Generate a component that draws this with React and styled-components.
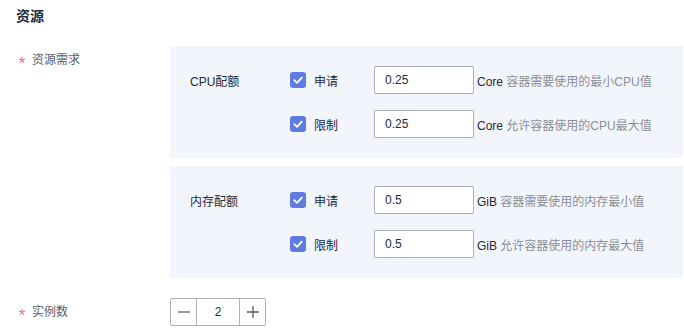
import React from "react";
import styled, { createGlobalStyle } from "styled-components";

const Global = createGlobalStyle`
  html, body { margin: 0; padding: 0; background: #fff; }
  body { font-family: "Liberation Sans", "Noto Sans CJK SC", sans-serif; font-size: 12px; color: #252b3a; }
  * { box-sizing: border-box; }
`;

const Page = styled.div`
  width: 684px;
  padding: 0 1px 0 16px;
`;

const Title = styled.div`
  height: 32px;
  line-height: 32px;
  font-size: 14px;
  font-weight: bold;
  color: #252b3a;
  margin-bottom: 14px;
`;

const FormItem = styled.div`
  display: grid;
  grid-template-columns: 154px 1fr;
  margin-top: ${(p) => p.$mt || 0}px;
`;

const ItemLabel = styled.div`
  display: flex;
  align-items: flex-start;
  height: 28px;
  line-height: 28px;
  color: #575d6c;
`;

const Star = styled.span`
  width: 12px;
  margin-right: 4px;
  margin-top: 9px;
  text-align: center;
  color: #f66f6a;
  font-size: 17px;
  line-height: 1;
`;

const Panels = styled.div`
  display: flex;
  flex-direction: column;
  gap: 8px;
`;

const Panel = styled.div`
  background: #f2f5fc;
  padding: 20px;
  display: grid;
  grid-template-columns: 100px 1fr;
`;

const PanelLabel = styled.div`
  line-height: 28px;
  margin-top: 2px;
  color: #252b3a;
`;

const Rows = styled.div`
  display: flex;
  flex-direction: column;
  gap: 16px;
`;

const Row = styled.div`
  display: flex;
  align-items: center;
  height: 28px;
`;

const Check = styled.label`
  display: flex;
  align-items: center;
  gap: 8px;
  width: 84px;
  color: #252b3a;
`;

const Box = styled.span`
  width: 16px;
  height: 16px;
  border-radius: 3px;
  background: #5e7ce0;
  display: flex;
  align-items: center;
  justify-content: center;
`;

const Input = styled.div`
  width: 100px;
  height: 28px;
  border: 1px solid #adb0b8;
  border-radius: 2px;
  background: #fff;
  padding: 0 10px;
  line-height: 26px;
  color: #252b3a;
`;

const Hint = styled.span`
  margin-left: 3px;
  color: #8a8e99;
  white-space: nowrap;
`;

const Unit = styled.span`
  color: #252b3a;
`;

const Stepper = styled.div`
  display: flex;
  width: 96px;
  height: 28px;
  border: 1px solid #adb0b8;
  border-radius: 2px;
  background: #fff;
`;

const StepBtn = styled.span`
  width: 26px;
  display: flex;
  align-items: center;
  justify-content: center;
  ${(p) => (p.$side === "left" ? "border-right: 1px solid #adb0b8;" : "border-left: 1px solid #adb0b8;")}
`;

const StepValue = styled.span`
  flex: 1;
  text-align: center;
  line-height: 26px;
  color: #252b3a;
`;

const CheckIcon = () => (
  <svg width="12" height="12" viewBox="0 0 12 12">
    <path d="M2.2 6.2 L5 8.8 L9.8 3.6" fill="none" stroke="#fff" strokeWidth="1.8" strokeLinecap="round" strokeLinejoin="round" />
  </svg>
);

const Minus = () => (
  <svg width="14" height="14" viewBox="0 0 14 14">
    <path d="M1 7 H13" stroke="#575d6c" strokeWidth="1.3" />
  </svg>
);

const Plus = () => (
  <svg width="14" height="14" viewBox="0 0 14 14">
    <path d="M1 7 H13 M7 1 V13" stroke="#575d6c" strokeWidth="1.3" />
  </svg>
);

const quotas = [
  {
    label: "CPU配额",
    unit: "Core",
    rows: [
      { name: "申请", value: "0.25", hint: "容器需要使用的最小CPU值" },
      { name: "限制", value: "0.25", hint: "允许容器使用的CPU最大值" },
    ],
  },
  {
    label: "内存配额",
    unit: "GiB",
    rows: [
      { name: "申请", value: "0.5", hint: "容器需要使用的内存最小值" },
      { name: "限制", value: "0.5", hint: "允许容器使用的内存最大值" },
    ],
  },
];

export default function App() {
  return (
    <>
      <Global />
      <Page>
        <Title>资源</Title>
        <FormItem>
          <ItemLabel>
            <Star>*</Star>资源需求
          </ItemLabel>
          <Panels>
            {quotas.map((q) => (
              <Panel key={q.label}>
                <PanelLabel>{q.label}</PanelLabel>
                <Rows>
                  {q.rows.map((r) => (
                    <Row key={r.name}>
                      <Check>
                        <Box>
                          <CheckIcon />
                        </Box>
                        {r.name}
                      </Check>
                      <Input>{r.value}</Input>
                      <Hint>
                        <Unit>{q.unit}</Unit> {r.hint}
                      </Hint>
                    </Row>
                  ))}
                </Rows>
              </Panel>
            ))}
          </Panels>
        </FormItem>
        <FormItem $mt={20}>
          <ItemLabel>
            <Star>*</Star>实例数
          </ItemLabel>
          <Stepper>
            <StepBtn $side="left">
              <Minus />
            </StepBtn>
            <StepValue>2</StepValue>
            <StepBtn $side="right">
              <Plus />
            </StepBtn>
          </Stepper>
        </FormItem>
      </Page>
    </>
  );
}
